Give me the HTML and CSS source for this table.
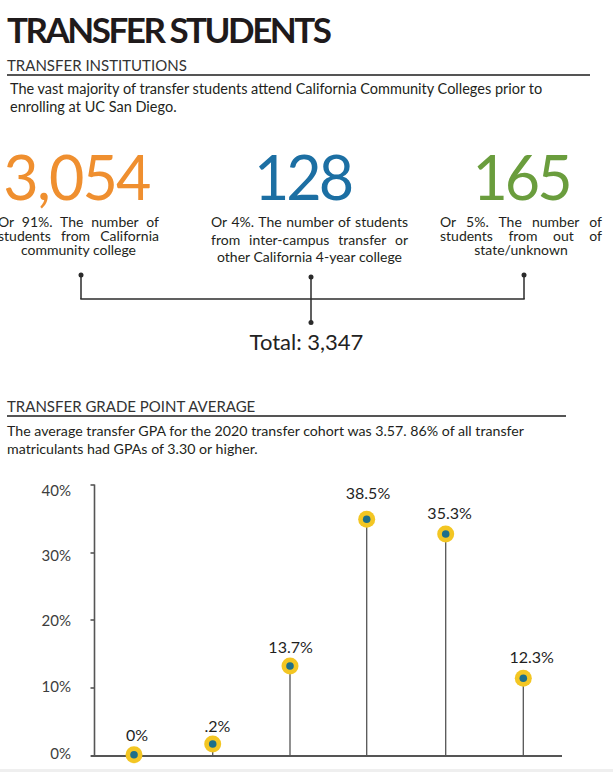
FILE: index.html
```html
<!DOCTYPE html>
<html lang="en">
<head>
<meta charset="utf-8">
<title>Transfer Students</title>
<link rel="stylesheet" href="styles.css">
</head>
<body>
<div class="page">
  <h1 class="title">TRANSFER STUDENTS</h1>
  <h2 class="subhead sh1">TRANSFER INSTITUTIONS</h2>
  <p class="lead l1">The vast majority of transfer students attend California Community Colleges prior to<br>enrolling at UC San Diego.</p>

  <div class="stats">
    <div class="stat s1">
      <div class="num orange">3,054</div>
      <div class="desc tight">
        <span class="jl">Or 91%. The number of</span>
        <span class="jl">students from California</span>
        <span class="cl">community college</span>
      </div>
    </div>
    <div class="stat s2">
      <div class="num blue">128</div>
      <div class="desc loose">
        <span class="jl">Or 4%. The number of students</span>
        <span class="jl">from inter-campus transfer or</span>
        <span class="cl">other California 4-year college</span>
      </div>
    </div>
    <div class="stat s3">
      <div class="num green">165</div>
      <div class="desc tight">
        <span class="jl">Or 5%. The number of</span>
        <span class="jl">students from out of</span>
        <span class="cl">state/unknown</span>
      </div>
    </div>
  </div>

  <svg class="connector" width="613" height="54" viewBox="0 0 613 54">
    <g stroke="#2b2b2b" stroke-width="1.5" fill="none">
      <line x1="81" y1="3" x2="81" y2="27"/>
      <line x1="524" y1="3" x2="524" y2="27"/>
      <line x1="80.3" y1="27" x2="524.7" y2="27"/>
      <line x1="311" y1="5" x2="311" y2="50.5"/>
    </g>
    <g fill="#2b2b2b">
      <circle cx="81" cy="3" r="2.5"/>
      <circle cx="311" cy="5" r="2.5"/>
      <circle cx="524" cy="3" r="2.5"/>
      <circle cx="311" cy="50.5" r="2.5"/>
    </g>
  </svg>
  <div class="total">Total: 3,347</div>

  <h2 class="subhead sh2">TRANSFER GRADE POINT AVERAGE</h2>
  <p class="lead l2">The average transfer GPA for the 2020 transfer cohort was 3.57. 86% of all transfer<br>matriculants had GPAs of 3.30 or higher.</p>

  <svg class="chart" width="613" height="299" viewBox="0 0 613 299">
    <g class="ylabels" text-anchor="end">
      <text x="71" y="25.5">40%</text>
      <text x="71" y="91">30%</text>
      <text x="71" y="156">20%</text>
      <text x="71" y="222">10%</text>
      <text x="71" y="288.5">0%</text>
    </g>
    <g stroke="#555" stroke-width="1.6" fill="none">
      <line x1="94.5" y1="14.5" x2="94.5" y2="286"/>
      <line x1="90.5" y1="15" x2="94.5" y2="15"/>
      <line x1="90.5" y1="83" x2="94.5" y2="83"/>
      <line x1="90.5" y1="150" x2="94.5" y2="150"/>
      <line x1="90.5" y1="218" x2="94.5" y2="218"/>
      <line x1="90.5" y1="286" x2="94.5" y2="286"/>
      <line x1="91" y1="286" x2="562" y2="286" stroke-width="2"/>
    </g>
    <g stroke="#555" stroke-width="1.3">
      <line x1="212.7" y1="274" x2="212.7" y2="286"/>
      <line x1="290" y1="196" x2="290" y2="286"/>
      <line x1="366.7" y1="49.3" x2="366.7" y2="286"/>
      <line x1="445.7" y1="64" x2="445.7" y2="286"/>
      <line x1="523.3" y1="208.3" x2="523.3" y2="286"/>
    </g>
    <g class="pts">
      <circle cx="134" cy="284.7" r="8.5" fill="#f3c623"/><circle cx="134" cy="284.7" r="3.8" fill="#1d6f8b"/>
      <circle cx="212.7" cy="274" r="8.5" fill="#f3c623"/><circle cx="212.7" cy="274" r="3.8" fill="#1d6f8b"/>
      <circle cx="290" cy="196" r="8.5" fill="#f3c623"/><circle cx="290" cy="196" r="3.8" fill="#1d6f8b"/>
      <circle cx="366.7" cy="49.3" r="8.5" fill="#f3c623"/><circle cx="366.7" cy="49.3" r="3.8" fill="#1d6f8b"/>
      <circle cx="445.7" cy="64" r="8.5" fill="#f3c623"/><circle cx="445.7" cy="64" r="3.8" fill="#1d6f8b"/>
      <circle cx="523.3" cy="208.3" r="8.5" fill="#f3c623"/><circle cx="523.3" cy="208.3" r="3.8" fill="#1d6f8b"/>
    </g>
    <g class="vlabels" text-anchor="middle">
      <text x="137" y="270.7">0%</text>
      <text x="217.4" y="261.7">.2%</text>
      <text x="290.6" y="182.7">13.7%</text>
      <text x="368" y="29.3">38.5%</text>
      <text x="449.6" y="49.3">35.3%</text>
      <text x="531.7" y="193.3">12.3%</text>
    </g>
  </svg>
  <div class="strip"></div>
</div>
</body>
</html>
```

FILE: styles.css
```css
html, body {
  margin: 0;
  padding: 0;
  background: #ffffff;
}
body {
  font-family: "Lato", "Open Sans", "DejaVu Sans", sans-serif;
  color: #231f20;
  overflow: hidden;
}
.page {
  width: 613px;
  padding-top: 8px;
}
.title {
  margin: 0 0 0 7px;
  font-size: 35px;
  line-height: 42px;
  font-weight: 700;
  letter-spacing: -2.5px;
  color: #1f1a1b;
}
.subhead {
  margin: 0 0 0 7px;
  font-size: 15px;
  line-height: 17px;
  font-weight: 400;
  color: #333;
  border-bottom: 2px solid #555;
}
.sh1 {
  margin-top: 7px;
  width: 583px;
}
.sh2 {
  margin-top: 43px;
  width: 559px;
}
.lead {
  margin: 0;
  line-height: 18px;
  color: #231f20;
}
.l1 {
  margin-top: 4px;
  padding-left: 10px;
  font-size: 14.5px;
}
.l2 {
  margin-top: 5px;
  padding-left: 7px;
  font-size: 14.2px;
}
.stats {
  display: flex;
  align-items: flex-start;
  margin-top: 30px;
  margin-left: -2px;
}
.stat {
  display: flex;
  flex-direction: column;
}
.s1 { width: 161px; }
.s2 { width: 197px; margin-left: 52px; }
.s3 { width: 162px; margin-left: 32px; }
.num {
  font-size: 61px;
  line-height: 61px;
  font-weight: 400;
  letter-spacing: -3px;
  text-align: center;
}
.s1 .num { letter-spacing: -1.8px; padding-right: 4px; }
.s2 .num { padding-right: 14px; }
.orange { color: #ef8f2f; }
.blue { color: #1c6fa3; }
.green { color: #6a9d3d; }
.desc {
  font-size: 14px;
  color: #231f20;
}
.desc span { display: block; }
.desc .jl { text-align: justify; text-align-last: justify; }
.desc .cl { text-align: center; }
.tight { line-height: 14px; margin-top: 8px; }
.loose { line-height: 17.5px; margin-top: 6px; }
.connector {
  display: block;
  margin-top: 6.5px;
}
.total {
  margin-top: 2.5px;
  font-size: 22px;
  line-height: 26px;
  text-align: center;
  color: #222;
}
.chart {
  display: block;
  margin-top: 12.5px;
}
.ylabels text {
  font-family: "Lato", sans-serif;
  font-size: 15px;
  fill: #3d3d3d;
}
.vlabels text {
  font-family: "Lato", sans-serif;
  font-size: 16px;
  fill: #1f1f1f;
}
.strip {
  height: 10px;
  background: #efefef;
}
```
